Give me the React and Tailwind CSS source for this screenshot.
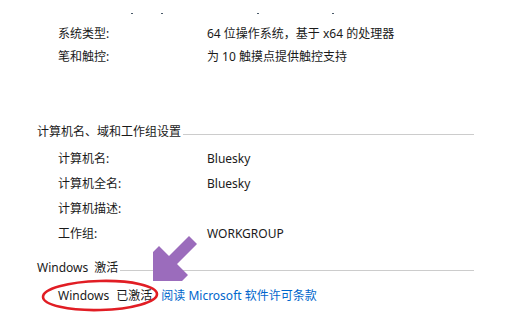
import React from "react";

const font = { fontFamily: '"Noto Sans", "Noto Sans CJK SC", sans-serif' };

const Row = ({ label, value, h = "h-[25px]" }) => (
    <div className={`flex items-center ${h} pl-[58px]`}>
        <div className="w-[149px] shrink-0">{label}</div>
        <div>{value}</div>
    </div>
);

const SectionHeader = ({ children }) => (
    <div className="flex items-center h-[24px] pl-[37px] pr-[47px]">
        <span className="shrink-0 flex">{children}</span>
        <div className="flex-1 h-px bg-[#cccccc] ml-[2px] mt-[4px]" />
    </div>
);

export default function App() {
    return (
        <div
            className="relative w-[521px] h-[320px] overflow-hidden bg-white text-[12px] text-[#1a1a1a] leading-none"
            style={font}
        >
            {/* bottoms of the row cut off above */}
            <div className="flex h-px mt-[13px]">
                <span className="w-[2px] h-px bg-[#4a5a6a] ml-[131px]" />
                <span className="w-[2px] h-px bg-[#4a5a6a] ml-[28px]" />
                <span className="w-[2px] h-px bg-[#4a5a6a] ml-[94px]" />
                <span className="w-[2px] h-px bg-[#4a5a6a] ml-[73px]" />
            </div>

            <div className="mt-[8px]">
                <Row h="h-[23px]" label="系统类型:" value="64 位操作系统，基于 x64 的处理器" />
                <Row h="h-[23px]" label="笔和触控:" value="为 10 触摸点提供触控支持" />
            </div>

            <div className="mt-[52px]">
                <SectionHeader>计算机名、域和工作组设置</SectionHeader>
                <div className="mt-[2px]">
                    <Row label="计算机名:" value="Bluesky" />
                    <Row label="计算机全名:" value="Bluesky" />
                    <Row label="计算机描述:" value="" />
                    <Row label="工作组:" value="WORKGROUP" />
                </div>
            </div>

            <div className="mt-[10px]">
                <SectionHeader>
                    <span>Windows</span>
                    <span className="ml-[6px]">激活</span>
                </SectionHeader>
                <div className="flex items-center h-[24px] pl-[58px] mt-[4px]">
                    <span>Windows</span>
                    <span className="ml-[7px]">已激活</span>
                    <a href="#" className="ml-[9px] text-[#0066cc]">阅读 Microsoft 软件许可条款</a>
                </div>
            </div>

            {/* red circle around the status */}
            <svg className="absolute left-0 top-0 pointer-events-none" width="521" height="320">
                <ellipse
                    cx="100"
                    cy="295.5"
                    rx="57"
                    ry="14.5"
                    fill="none"
                    stroke="#e11d24"
                    strokeWidth="2.6"
                    transform="rotate(-1.5 100 295.5)"
                />
                {/* purple arrow pointing at it */}
                <polygon
                    points="153,281 153,252 159,246 169,256 189,236 197,244 177,264 188,275 182,281"
                    fill="#9b6cbc"
                />
            </svg>
        </div>
    );
}
